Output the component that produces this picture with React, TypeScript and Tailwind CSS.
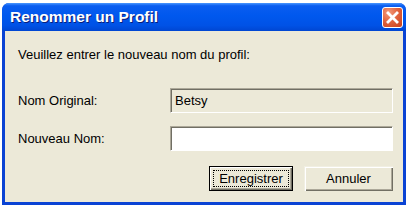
import React from "react";

const font = { fontFamily: '"Liberation Sans", Arial, sans-serif' };

function CloseButton() {
  return (
    <div className="w-[21px] h-[21px] rounded-[3px] border border-white bg-[radial-gradient(circle_at_30%_25%,#f29a7c_0%,#e2643f_45%,#c9401b_100%)] flex items-center justify-center">
      <svg width="13" height="13" viewBox="0 0 13 13">
        <path d="M2 2 L11 11 M11 2 L2 11" stroke="#fff" strokeWidth="2.8" strokeLinecap="square" />
      </svg>
    </div>
  );
}

export default function App() {
  return (
    <div className="w-[409px] h-[207px] bg-white pt-[3px] pl-[2px]" style={font}>
      <div className="w-[404px] h-[202px] flex flex-col rounded-t-[7px] bg-[#0a43d4] overflow-hidden">
        {/* title bar */}
        <div className="h-[28px] shrink-0 flex items-center justify-between pl-[8px] pr-[3px] bg-[linear-gradient(to_bottom,#4a97ff_0%,#0a5df0_10%,#0058ee_45%,#0052e6_80%,#0046d2_100%)]">
          <span className="text-white font-bold text-[15.5px] [text-shadow:1px_1px_0_#0a1f7a]">
            Renommer un Profil
          </span>
          <CloseButton />
        </div>

        {/* body */}
        <div className="flex-1 mx-[3px] mb-[3px] bg-[#ece9d8] text-[13px] text-black pl-[13px] pr-[10px] pt-[16px] flex flex-col">
          <p className="leading-[16px]">Veuillez entrer le nouveau nom du profil:</p>

          <div className="mt-[25px] flex items-center">
            <span className="w-[152px]">Nom Original:</span>
            <div className="flex-1 h-[25px] flex items-center pl-[4px] border border-t-[#aca899] border-l-[#aca899] border-b-white border-r-white shadow-[inset_1px_1px_0_#716f64] bg-[#ece9d8]">
              Betsy
            </div>
          </div>

          <div className="mt-[13px] flex items-center">
            <span className="w-[152px]">Nouveau Nom:</span>
            <div className="flex-1 h-[25px] border border-t-[#aca899] border-l-[#aca899] border-b-white border-r-white shadow-[inset_1px_1px_0_#716f64] bg-white" />
          </div>

          <div className="mt-[15px] flex justify-end gap-[11px]">
            <button className="w-[84px] h-[25px] border border-black bg-[#ece9d8] p-[3px] shadow-[inset_1px_1px_0_#fff,inset_-1px_-1px_0_#716f64,inset_-2px_-2px_0_#aca899]">
              <span className="h-full flex items-center justify-center border border-dotted border-black">
                Enregistrer
              </span>
            </button>
            <button className="w-[89px] h-[25px] bg-[#ece9d8] flex items-center justify-center shadow-[inset_1px_1px_0_#f1efe2,inset_2px_2px_0_#fff,inset_-1px_-1px_0_#716f64,inset_-2px_-2px_0_#aca899]">
              Annuler
            </button>
          </div>
        </div>
      </div>
    </div>
  );
}
